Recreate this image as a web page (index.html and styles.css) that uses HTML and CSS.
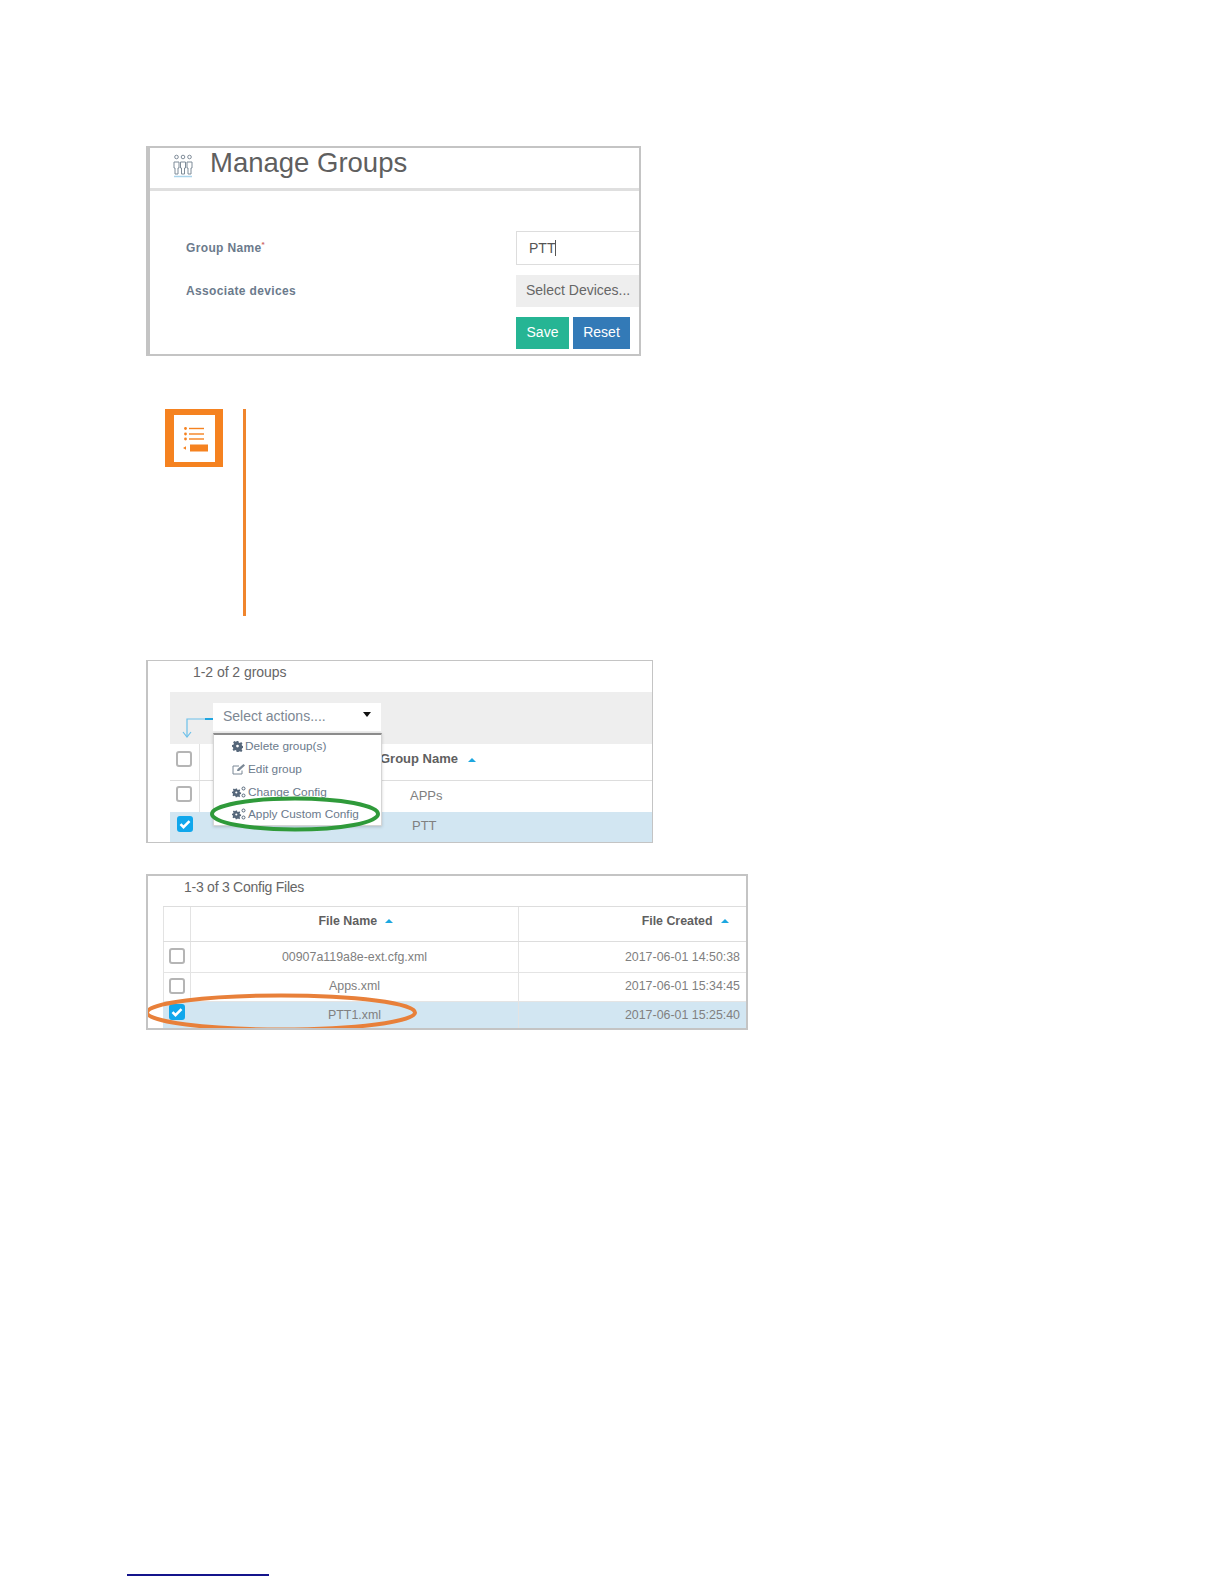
FILE: index.html
```html
<!DOCTYPE html>
<html lang="en">
<head>
<meta charset="utf-8">
<title>Manage Groups</title>
<link rel="stylesheet" href="styles.css">
</head>
<body>
<main class="page">
  <section class="shot manage">
    <header class="manage-head">
      <svg class="people" viewBox="0 0 22 24" width="22" height="24" fill="none" stroke="#7f8c99" stroke-width="1">
        <circle cx="4.500" cy="3" r="1.800"/><circle cx="11" cy="3" r="1.800"/><circle cx="17.500" cy="3" r="1.800"/>
        <path d="M2 8h5v6H6v6H3v-6H2zM8.500 8h5v6h-1v6h-3v-6h-1zM15 8h5v6h-1v6h-3v-6h-1z"/>
        <path d="M2 22.500h18" stroke="#a9d3ea" stroke-width="1.500"/>
      </svg>
      <h1 class="manage-title">Manage Groups</h1>
    </header>
    <div class="manage-form">
      <label class="field-label">Group Name<sup class="req">*</sup></label>
      <div class="input">PTT<span class="caret-bar"></span></div>
      <label class="field-label">Associate devices</label>
      <div class="select-devices">Select Devices...</div>
      <div class="actions">
        <button class="btn save">Save</button>
        <button class="btn reset">Reset</button>
      </div>
    </div>
  </section>

  <section class="note">
    <div class="note-icon">
      <svg viewBox="0 0 41 47" width="41" height="47">
        <g fill="#f58220">
          <circle cx="11.500" cy="13.500" r="1.400"/><circle cx="11.500" cy="19" r="1.400"/><circle cx="11.500" cy="24" r="1.400"/>
          <rect x="15" y="12.800" width="15" height="1.400"/><rect x="15" y="18.300" width="15" height="1.400"/><rect x="15" y="23.300" width="15" height="1.400"/>
          <rect x="16" y="29.500" width="18" height="7"/><path d="M9 33l3-1.800v3.600z"/>
        </g>
      </svg>
    </div>
    <div class="note-rule"></div>
  </section>

  <section class="shot groups">
    <p class="count groups-count">1-2 of 2 groups</p>
    <div class="toolbar">
      <svg class="arrow" viewBox="0 0 31 22" width="31" height="22" fill="none" stroke="#6cc0ea" stroke-width="1.200">
        <path d="M5 20V2h19"/><path d="M1 15l4 5 4-5"/><path d="M23 2h8" stroke="#1fa5e0" stroke-width="2"/>
      </svg>
      <div class="select-actions"><span class="sel-text">Select actions....</span><i class="tri"></i></div>
    </div>
    <div class="grid-row grid-head">
      <span class="cell-check"><i class="box"></i></span>
      <span class="cell-name head-name">Group Name <i class="sort"></i></span>
    </div>
    <div class="grid-row grid-a">
      <span class="cell-check"><i class="box"></i></span>
      <span class="cell-name name-apps">APPs</span>
    </div>
    <div class="grid-row grid-b">
      <span class="cell-check"><i class="box on"><svg viewBox="0 0 16 16" width="16" height="16"><path d="M3.500 8.200l3 3 6-6" fill="none" stroke="#fff" stroke-width="2.600"/></svg></i></span>
      <span class="cell-name name-ptt">PTT</span>
    </div>
    <ul class="menu">
      <li class="menu-item"><svg class="mi" viewBox="0 0 12 12" width="11" height="11"><path d="M5 0h2l.3 1.600 1.300.5L10 1.200l1.400 1.400-.9 1.400.5 1.300 1.600.3v2l-1.600.3-.5 1.300.9 1.400-1.400 1.400-1.400-.9-1.300.5L7 12H5l-.3-1.600-1.300-.5-1.400.9L.6 9.400l.9-1.400-.5-1.300L0 6.400v-2l1.600-.3.500-1.300-.9-1.400L2.600 0l1.400.9 1.300-.5zM6 4a1.500 1.500 0 1 0 0 3 1.500 1.500 0 0 0 0-3z" fill="#56677a" fill-rule="evenodd"/></svg>Delete group(s)</li>
      <li class="menu-item"><svg class="mi edit" viewBox="0 0 14 12" width="14" height="12" fill="none" stroke="#7a8896"><path d="M10 7.500V11H1V3h6"/><path d="M5 8l.5-2 6-5 1.500 1.500-6 5.500z" fill="#7a8896" stroke="none"/></svg>Edit group</li>
      <li class="menu-item"><svg class="mi gears" viewBox="0 0 14 12" width="14" height="12"><path transform="translate(0 2.500) scale(.72)" d="M5 0h2l.3 1.600 1.300.5L10 1.200l1.400 1.400-.9 1.400.5 1.300 1.600.3v2l-1.600.3-.5 1.300.9 1.400-1.400 1.400-1.400-.9-1.300.5L7 12H5l-.3-1.600-1.300-.5-1.400.9L.6 9.400l.9-1.400-.5-1.300L0 6.400v-2l1.600-.3.500-1.300-.9-1.400L2.600 0l1.400.9 1.300-.5zM6 4a1.500 1.500 0 1 0 0 3 1.500 1.500 0 0 0 0-3z" fill="#56677a" fill-rule="evenodd"/><circle cx="11.500" cy="2.500" r="1.500" fill="none" stroke="#56677a"/><circle cx="11.500" cy="9.500" r="1.500" fill="none" stroke="#56677a"/></svg>Change Config</li>
      <li class="menu-item"><svg class="mi gears" viewBox="0 0 14 12" width="14" height="12"><path transform="translate(0 2.500) scale(.72)" d="M5 0h2l.3 1.600 1.300.5L10 1.200l1.400 1.400-.9 1.400.5 1.300 1.600.3v2l-1.600.3-.5 1.300.9 1.400-1.400 1.400-1.400-.9-1.300.5L7 12H5l-.3-1.600-1.300-.5-1.400.9L.6 9.400l.9-1.400-.5-1.300L0 6.400v-2l1.600-.3.500-1.300-.9-1.400L2.600 0l1.400.9 1.300-.5zM6 4a1.500 1.500 0 1 0 0 3 1.500 1.500 0 0 0 0-3z" fill="#56677a" fill-rule="evenodd"/><circle cx="11.500" cy="2.500" r="1.500" fill="none" stroke="#56677a"/><circle cx="11.500" cy="9.500" r="1.500" fill="none" stroke="#56677a"/></svg>Apply Custom Config</li>
    </ul>
    <svg class="ring ring-green" viewBox="0 0 170 36" width="170" height="36"><ellipse cx="85" cy="18" rx="83" ry="15.500" fill="none" stroke="#2f9a3a" stroke-width="4"/></svg>
  </section>

  <section class="shot files">
    <p class="count files-count">1-3 of 3 Config Files</p>
    <div class="file-table">
      <div class="file-row file-head">
        <span class="fc"></span>
        <span class="fn">File Name <i class="sort"></i></span>
        <span class="fd">File Created <i class="sort"></i></span>
      </div>
      <div class="file-row r1">
        <span class="fc"><i class="box"></i></span>
        <span class="fn">00907a119a8e-ext.cfg.xml</span>
        <span class="fd">2017-06-01 14:50:38</span>
      </div>
      <div class="file-row r2">
        <span class="fc"><i class="box"></i></span>
        <span class="fn">Apps.xml</span>
        <span class="fd">2017-06-01 15:34:45</span>
      </div>
      <div class="file-row r3">
        <span class="fc"><i class="box on"><svg viewBox="0 0 16 16" width="16" height="16"><path d="M3.500 8.200l3 3 6-6" fill="none" stroke="#fff" stroke-width="2.600"/></svg></i></span>
        <span class="fn">PTT1.xml</span>
        <span class="fd">2017-06-01 15:25:40</span>
      </div>
    </div>
    <svg class="ring ring-orange" viewBox="0 0 272 39" width="272" height="39"><ellipse cx="136" cy="19.500" rx="134" ry="17" fill="none" stroke="#e8803a" stroke-width="4"/></svg>
  </section>

  <div class="foot-rule"></div>
</main>
</body>
</html>
```
FILE: styles.css
```css
* { box-sizing: border-box; }
html, body { margin: 0; padding: 0; background: #fff; }
body { font-family: "Liberation Sans", Arial, sans-serif; color: #666; }
.page { position: relative; width: 1224px; height: 1584px; padding: 146px 0 0 146px; display: flex; flex-direction: column; align-items: flex-start; }

.shot { position: relative; border: 1px solid #c4c4c4; background: #fff; overflow: hidden; }

/* Manage Groups */
.manage { width: 495px; height: 210px; border-color: #c4c4c4; border-style: solid; border-width: 2px 2px 2px 4px; }
.manage-head { height: 43px; border-bottom: 3px solid #dfdfdf; display: flex; align-items: center; padding-left: 22px; }
.people { flex: none; margin-top: -4px; }
.manage-title { margin: 0 0 0 16px; font-size: 27.500px; font-weight: 400; color: #5f5f5f; line-height: 30px; transform: translateY(-5px); }
.manage-form { display: grid; grid-template-columns: 330px 124px; column-gap: 0; padding: 40px 0 0 36px; align-items: center; grid-auto-rows: min-content; }
.field-label { font-size: 12px; font-weight: 700; color: #6b7a8c; letter-spacing: .35px; }
.req { font-size: 8px; color: #c66; line-height: 0; }
.input { height: 34px; border: 1px solid #ddd; border-right: 0; padding-left: 12px; font-size: 14px; line-height: 30px; color: #555; display: flex; align-items: center; }
.caret-bar { width: 1px; height: 16px; background: #555; }
.select-devices { height: 32px; margin-top: 10px; background: #eee; padding-left: 10px; font-size: 14px; line-height: 30px; color: #666; white-space: nowrap; overflow: hidden; }
.manage-form .field-label:nth-of-type(2) { margin-top: 10px; }
.actions { grid-column: 2; display: flex; gap: 4px; margin-top: 10px; }
.btn { border: 0; height: 32px; padding: 0 0 2px; color: #fff; font: 400 14px "Liberation Sans", Arial, sans-serif; }
.save { width: 53px; background: #26b594; }
.reset { width: 57px; background: #337ab7; }

/* Note */
.note { display: flex; margin: 53px 0 0 19px; height: 207px; }
.note-icon { width: 58px; height: 58px; border: solid #f58220; border-width: 6px 8px 5px 9px; background: #fff; flex: none; }
.note-icon svg { display: block; }
.note-rule { width: 3px; height: 207px; margin-left: 20px; background: #f0852d; }

.count { margin: 0; font-size: 14px; line-height: 18px; color: #666; }

/* Groups */
.groups { width: 507px; height: 183px; margin-top: 44px; border-width: 1px 1px 1px 2px; }
.groups-count { padding: 2px 0 0 45px; height: 31px; letter-spacing: -.05px; }
.toolbar { margin-left: 22px; height: 52px; background: #eee; position: relative; padding: 11px 0 0 43px; }
.arrow { position: absolute; left: 12px; top: 25px; }
.select-actions { width: 168px; height: 28px; background: #fff; display: flex; align-items: center; justify-content: space-between; padding: 0 10px 0 10px; font-size: 14px; color: #7d8793; }
.sel-text { margin-top: -2px; }
.tri { width: 0; height: 0; border: 4.500px solid transparent; border-top: 5px solid #111; border-bottom: 0; margin-top: -5px; }
.grid-row { margin-left: 22px; display: flex; align-items: center; font-size: 13px; color: #808080; }
.grid-head { height: 37px; border-bottom: 1px solid #ddd; background: #fff; }
.grid-a { height: 31px; }
.grid-b { height: 30px; background: #d2e6f2; }
.cell-check { width: 30px; height: 100%; border-right: 1px solid #e3e3e3; display: flex; align-items: center; padding: 0 0 6px 6px; flex: none; }
.grid-b .cell-check { border-right: 0; padding-left: 7px; }
.cell-name { margin-left: 208px; }
.head-name { margin-left: 180px; padding-bottom: 7px; font-size: 13px; font-weight: 700; color: #5f5f5f; }
.name-apps { margin-left: 210px; padding-bottom: 2px; }
.name-ptt { margin-left: 212px; padding-bottom: 3px; }
.box { display: block; width: 16px; height: 16px; border: 2px solid #b5b5b5; border-radius: 3px; background: #fff; position: relative; }
.box.on { background: #10a7ec; border: 0; }
.box svg { display: block; }
.sort { display: inline-block; width: 0; height: 0; border: 4px solid transparent; border-bottom: 4px solid #1da7e0; border-top: 0; margin: 0 0 1px 6px; }

.menu { position: absolute; left: 65px; top: 72px; width: 169px; height: 93px; margin: 0; padding: 0 0 0 19px; list-style: none; background: #fff; border: 1px solid #d5d5d5; border-top: 2px solid #8c8c8c; box-shadow: 0 1px 3px rgba(0,0,0,.18); font-size: 11.800px; color: #6b7a8c; }
.menu-item { height: 22.700px; display: flex; align-items: center; gap: 2px; white-space: nowrap; }
.mi { flex: none; margin-left: -1px; }
.ring { position: absolute; display: block; }
.ring-green { left: 62px; top: 135px; }

/* Files */
.files { width: 602px; height: 156px; margin-top: 31px; border-width: 2px; overflow: hidden; }
.files-count { padding: 2px 0 0 36px; height: 30px; letter-spacing: -.25px; }
.file-table { margin-left: 15px; }
.file-row { display: flex; height: 30px; border-bottom: 1px solid #e4e4e4; font-size: 12.400px; color: #808080; align-items: stretch; }
.file-head { height: 36px; border-top: 1px solid #ddd; border-bottom: 1px solid #ddd; font-weight: 700; color: #5f5f5f; }
.file-head .fn, .file-head .fd { padding-bottom: 6px; }
.r1 { height: 31px; }
.r2 { height: 29px; }
.r3 { height: 29px; background: #d2e6f2; border-bottom: 0; }
.fc { width: 28px; flex: none; border-right: 1px solid #e3e3e3; border-left: 1px solid #e3e3e3; display: flex; align-items: center; padding: 0 0 2px 5px; }
.r3 .fc { border: 0; padding: 0 0 9px 6px; }
.fn { width: 328px; flex: none; border-right: 1px solid #e3e3e3; display: flex; align-items: center; justify-content: center; white-space: pre; }
.fd { flex: 1; display: flex; align-items: center; justify-content: flex-end; padding-right: 6px; white-space: pre; }
.r2 .fn, .r2 .fd { padding-bottom: 3px; }
.r3 .fn, .r3 .fd { padding-bottom: 3px; }
.file-head .fd { padding-right: 17px; }
.file-head .fn { padding-left: 3px; }
.file-head .sort { margin-left: 5px; }
.ring-orange { left: -3px; top: 117px; }

.foot-rule { position: absolute; left: 127px; top: 1574px; width: 142px; height: 2px; background: #14148c; }
```
